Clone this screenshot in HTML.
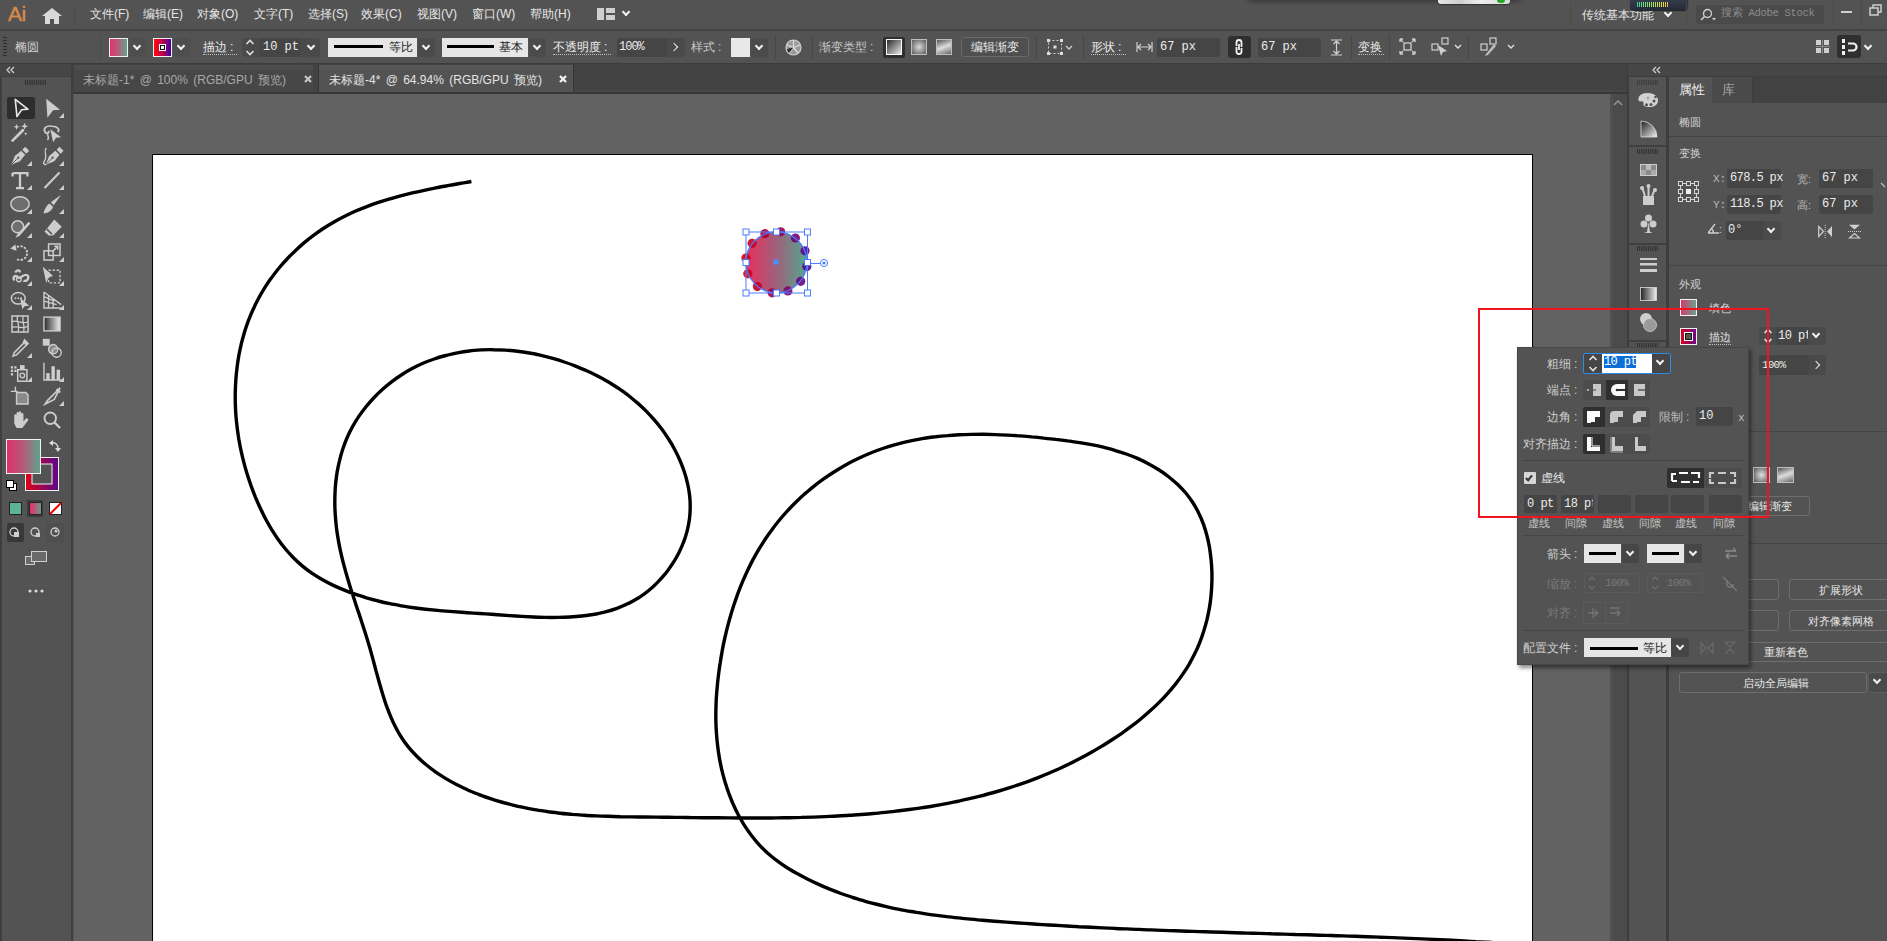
<!DOCTYPE html>
<html><head><meta charset="utf-8">
<style>
*{box-sizing:border-box;margin:0;padding:0}
html,body{width:1887px;height:941px;overflow:hidden;background:#535353;font-family:"Liberation Sans",sans-serif;font-size:12px;color:#dcdcdc}
.a{position:absolute}
.t{position:absolute;white-space:nowrap;line-height:14px}
.mono{font-family:"Liberation Mono",monospace}
.fld{position:absolute;background:#454545;border-radius:2px}
.btn{position:absolute;background:#464646;border-radius:2px}
.sep{position:absolute;background:#474747;width:1px}
.dd{position:absolute;border-radius:2px;background:#4d4d4d}
.chev{position:absolute;width:7px;height:7px;border-right:2px solid #f2f2f2;border-bottom:2px solid #f2f2f2;transform:rotate(45deg)}
.dot{border-bottom:1px dotted #cfcfcf}
</style></head><body>

<!-- MENU BAR -->
<div class="a" style="left:0;top:0;width:1887px;height:29px;background:#535353"></div>
<div class="a" style="left:0;top:29px;width:1887px;height:2px;background:#434343"></div>


<!-- menu content -->
<div class="t" style="left:8px;top:3px;font-size:21px;line-height:22px;color:#d88a4a;letter-spacing:-0.5px;-webkit-text-stroke:0.4px #d88a4a">Ai</div>
<svg class="a" style="left:42px;top:7.5px" width="20" height="16" viewBox="0 0 20 16"><path d="M10 0 L20 8 L17 8 L17 16 L12 16 L12 11 L8 11 L8 16 L3 16 L3 8 L0 8 Z" fill="#d9d9d9"/></svg>
<div class="a" style="left:74px;top:5px;width:1px;height:20px;background:#4a4a4a"></div>
<div class="t" style="left:90px;top:7px;color:#e6e6e6">文件(F)</div>
<div class="t" style="left:143px;top:7px;color:#e6e6e6">编辑(E)</div>
<div class="t" style="left:197px;top:7px;color:#e6e6e6">对象(O)</div>
<div class="t" style="left:254px;top:7px;color:#e6e6e6">文字(T)</div>
<div class="t" style="left:308px;top:7px;color:#e6e6e6">选择(S)</div>
<div class="t" style="left:361px;top:7px;color:#e6e6e6">效果(C)</div>
<div class="t" style="left:417px;top:7px;color:#e6e6e6">视图(V)</div>
<div class="t" style="left:472px;top:7px;color:#e6e6e6">窗口(W)</div>
<div class="t" style="left:530px;top:7px;color:#e6e6e6">帮助(H)</div>
<svg class="a" style="left:597px;top:8px" width="18" height="12" viewBox="0 0 18 12"><rect x="0" y="0" width="7" height="12" fill="#cfcfcf"/><rect x="9" y="0" width="9" height="5" fill="#cfcfcf"/><rect x="9" y="7" width="9" height="5" fill="#cfcfcf"/></svg>
<div class="chev" style="left:623px;top:9px;width:6px;height:6px;border-width:2px"></div>


<div class="a" style="left:1246px;top:-6px;width:278px;height:8px;background:#3a3a3a;border-radius:0 0 8px 8px;filter:blur(2px)"></div>
<div class="a" style="left:1438px;top:0;width:72px;height:4px;background:linear-gradient(90deg,#e8e8e8,#cfcfcf 30%,#eee 60%,#d8d8d8);border-radius:0 0 3px 3px;box-shadow:0 1px 1px #333"></div>
<div class="a" style="left:1497px;top:0;width:8px;height:3px;background:#22aa22;border-radius:0 0 4px 4px"></div>
<div class="a" style="left:1570px;top:3px;width:1px;height:22px;background:#4a4a4a"></div>
<div class="t" style="left:1582px;top:8px;color:#e6e6e6">传统基本功能</div>
<div class="chev" style="left:1665px;top:10px;width:6px;height:6px;border-width:2px"></div>
<div class="a" style="left:1630px;top:0;width:58px;height:10px;background:linear-gradient(#343c4c,#252b38);border-radius:0 0 4px 4px;box-shadow:0 1px 1px #222"></div>
<div class="a" style="left:1637px;top:2px;width:32px;height:5px;background:linear-gradient(90deg,#40d8a0,#a0e060 45%,#e8e040 80%,#f0b030);-webkit-mask:repeating-linear-gradient(90deg,#000 0 1px,transparent 1px 2px)"></div>
<div class="a" style="left:1686px;top:3px;width:1px;height:22px;background:#4a4a4a"></div>
<div class="a" style="left:1696px;top:5px;width:128px;height:19px;background:#4a4a4a;border-radius:3px"></div>
<svg class="a" style="left:1700px;top:8px" width="16" height="14" viewBox="0 0 16 14"><circle cx="7.5" cy="5.5" r="4" fill="none" stroke="#cfcfcf" stroke-width="1.4"/><path d="M4.5 8.5 L1 12" stroke="#cfcfcf" stroke-width="1.6"/><path d="M12 10 L16 10 L14 12.5 Z" fill="#cfcfcf"/></svg>
<div class="t" style="left:1721px;top:6px;color:#8c8c8c;font-family:'Liberation Mono',monospace;font-size:10.5px;letter-spacing:-0.3px">搜索 Adobe Stock</div>
<div class="a" style="left:1833px;top:0;width:1px;height:25px;background:#4a4a4a"></div>
<div class="a" style="left:1841px;top:11px;width:11px;height:2px;background:#cfcfcf"></div>
<div class="a" style="left:1861px;top:0;width:1px;height:25px;background:#4a4a4a"></div>
<svg class="a" style="left:1869px;top:4px" width="13" height="12" viewBox="0 0 13 12"><rect x="1" y="4" width="8" height="7" fill="none" stroke="#cfcfcf" stroke-width="1.5"/><path d="M4 4 V1 H12 V8 H9" fill="none" stroke="#cfcfcf" stroke-width="1.5"/></svg>

<!-- CONTROL BAR -->
<div class="a" style="left:0;top:31px;width:1887px;height:33px;background:#535353"></div>


<!-- control content -->
<div class="a" style="left:3px;top:37px;width:4px;height:20px;background:repeating-linear-gradient(#2e2e2e 0 1px,transparent 1px 3px)"></div>
<div class="t" style="left:15px;top:40px;color:#d2d2d2">椭圆</div>
<div class="a" style="left:100px;top:35px;width:1px;height:24px;background:#4a4a4a"></div>
<!-- fill swatch -->
<div class="a" style="left:109px;top:38px;width:19px;height:19px;background:#f0f0f0"></div>
<div class="a" style="left:110px;top:39px;width:17px;height:17px;background:linear-gradient(90deg,#e0356a,#b85a78 45%,#5fa58e)"></div>
<div class="dd" style="left:130px;top:38px;width:16px;height:19px;background:#4e4e4e"></div>
<div class="chev" style="left:134px;top:43px;width:6px;height:6px;border-width:2px"></div>
<!-- stroke swatch -->
<div class="a" style="left:153px;top:38px;width:19px;height:19px;background:#f0f0f0"></div>
<div class="a" style="left:154px;top:39px;width:17px;height:17px;background:linear-gradient(90deg,#ff0a0a,#c0004a 50%,#3c00a8)"></div>
<div class="a" style="left:159px;top:44px;width:7px;height:7px;background:#fff"></div>
<div class="a" style="left:160px;top:45px;width:5px;height:5px;background:#fff;border:1px solid #111"></div>
<div class="dd" style="left:174px;top:38px;width:16px;height:19px;background:#4e4e4e"></div>
<div class="chev" style="left:178px;top:43px;width:6px;height:6px;border-width:2px"></div>
<div class="t" style="left:203px;top:40px;color:#ececec">描边<span style="margin-left:3px">:</span></div>
<div class="a" style="left:203px;top:54px;width:34px;border-bottom:1px dotted #bdbdbd"></div>
<!-- stroke weight -->
<div class="fld" style="left:242px;top:38px;width:78px;height:19px;background:#4a4a4a"></div>
<svg class="a" style="left:245px;top:39px" width="10" height="17" viewBox="0 0 10 17"><path d="M1.5 5 L5 1.5 L8.5 5 M1.5 12 L5 15.5 L8.5 12" stroke="#e0e0e0" stroke-width="1.6" fill="none"/></svg>
<div class="fld" style="left:260px;top:38px;width:40px;height:19px;background:#454545"></div>
<div class="t mono" style="left:263px;top:40px;color:#ececec">10 pt</div>
<div class="chev" style="left:308px;top:43px;width:6px;height:6px;border-width:2px"></div>
<!-- profile 1 -->
<div class="a" style="left:328px;top:38px;width:89px;height:19px;background:#e6e6e6"></div>
<div class="a" style="left:334px;top:45px;width:49px;height:3px;background:#000"></div>
<div class="t" style="left:389px;top:40px;color:#222">等比</div>
<div class="dd" style="left:418px;top:38px;width:17px;height:19px;background:#4b4b4b"></div>
<div class="chev" style="left:423px;top:43px;width:6px;height:6px;border-width:2px"></div>
<!-- profile 2 -->
<div class="a" style="left:442px;top:38px;width:86px;height:19px;background:#e6e6e6"></div>
<div class="a" style="left:447px;top:45px;width:47px;height:3px;background:#000"></div>
<div class="t" style="left:499px;top:40px;color:#222">基本</div>
<div class="dd" style="left:529px;top:38px;width:17px;height:19px;background:#4b4b4b"></div>
<div class="chev" style="left:534px;top:43px;width:6px;height:6px;border-width:2px"></div>
<div class="t" style="left:553px;top:40px;color:#ececec">不透明度<span style="margin-left:3px">:</span></div>
<div class="a" style="left:553px;top:54px;width:58px;border-bottom:1px dotted #bdbdbd"></div>
<div class="fld" style="left:617px;top:38px;width:68px;height:19px;background:#4a4a4a"></div>
<div class="fld" style="left:617px;top:38px;width:50px;height:19px;background:#454545"></div>
<div class="t mono" style="left:619px;top:40px;color:#ececec;letter-spacing:-1px">100%</div>
<div class="a" style="left:671px;top:44px;width:6px;height:6px;border-right:1.5px solid #e6e6e6;border-top:1.5px solid #e6e6e6;transform:rotate(45deg)"></div>
<div class="t" style="left:691px;top:40px;color:#c8c8c8">样式<span style="margin-left:3px">:</span></div>
<div class="a" style="left:731px;top:38px;width:19px;height:19px;background:#e8e8e8"></div>
<div class="dd" style="left:751px;top:38px;width:17px;height:19px;background:#4b4b4b"></div>
<div class="chev" style="left:756px;top:43px;width:6px;height:6px;border-width:2px"></div>
<div class="sep" style="left:775px;top:35px;height:24px"></div>
<svg class="a" style="left:785px;top:39px" width="17" height="17" viewBox="0 0 17 17"><circle cx="8.5" cy="8.5" r="7.5" fill="#9a9a9a" stroke="#cfcfcf" stroke-width="1.2"/><path d="M8.5 8.5 L8.5 1 M8.5 8.5 L15 6 M8.5 8.5 L13 14 M8.5 8.5 L4 14 M8.5 8.5 L2 6" stroke="#e0e0e0" stroke-width="1.2"/><path d="M8.5 8.5 L4 14 A7.5 7.5 0 0 1 2 10 Z" fill="#2a2a2a"/></svg>
<div class="sep" style="left:812px;top:35px;height:24px"></div>
<div class="t" style="left:819px;top:40px;color:#c8c8c8">渐变类型<span style="margin-left:3px">:</span></div>
<div class="a" style="left:883px;top:37px;width:22px;height:21px;background:#2f2f2f;border-radius:2px"></div>
<div class="a" style="left:886px;top:39px;width:16px;height:16px;border:1.5px solid #fafafa;background:linear-gradient(135deg,#2a2a2a,#e8e8e8)"></div>
<div class="a" style="left:911px;top:39px;width:16px;height:16px;border:1px solid #bdbdbd;background:radial-gradient(circle,#d8d8d8,#5a5a5a)"></div>
<div class="a" style="left:936px;top:39px;width:16px;height:16px;border:1px solid #bdbdbd;background:linear-gradient(160deg,#555,#ddd 50%,#666)"></div>
<div class="a" style="left:961px;top:37px;width:68px;height:20px;border:1px solid #6a6a6a;border-radius:3px;background:#4f4f4f"></div>
<div class="t" style="left:971px;top:40px;color:#e8e8e8">编辑渐变</div>
<div class="sep" style="left:1036px;top:35px;height:24px"></div>
<svg class="a" style="left:1047px;top:39px" width="28" height="16" viewBox="0 0 28 16"><rect x="1.5" y="1.5" width="13" height="13" fill="none" stroke="#cfcfcf" stroke-dasharray="2 2"/><rect x="0" y="0" width="3" height="3" fill="#ddd"/><rect x="13" y="0" width="3" height="3" fill="#ddd"/><rect x="0" y="13" width="3" height="3" fill="#ddd"/><rect x="13" y="13" width="3" height="3" fill="#ddd"/><rect x="6.5" y="6.5" width="3" height="3" fill="#ddd"/><path d="M19 7 L22 10 L25 7" stroke="#cfcfcf" stroke-width="1.3" fill="none"/></svg>
<div class="sep" style="left:1083px;top:35px;height:24px"></div>
<div class="t" style="left:1091px;top:40px;color:#ececec">形状<span style="margin-left:3px">:</span></div>
<div class="a" style="left:1091px;top:54px;width:35px;border-bottom:1px dotted #bdbdbd"></div>
<svg class="a" style="left:1136px;top:42px" width="17" height="10" viewBox="0 0 17 10"><path d="M1 0 V10 M16 0 V10 M2 5 H15 M2 5 L5 2 M2 5 L5 8 M15 5 L12 2 M15 5 L12 8" stroke="#cfcfcf" stroke-width="1.2" fill="none"/></svg>
<div class="fld" style="left:1157px;top:38px;width:63px;height:19px"></div>
<div class="t mono" style="left:1160px;top:40px;color:#ececec">67 px</div>
<div class="a" style="left:1228px;top:36px;width:23px;height:22px;background:#2f2f2f;border-radius:3px"></div>
<svg class="a" style="left:1233px;top:38px" width="12" height="18" viewBox="0 0 12 18"><path d="M3.5 8 V4.5 A2.5 2.5 0 0 1 8.5 4.5 V9 M8.5 10 V13.5 A2.5 2.5 0 0 1 3.5 13.5 V9 M6 6 V12" stroke="#f2f2f2" stroke-width="1.8" fill="none"/></svg>
<div class="fld" style="left:1258px;top:38px;width:63px;height:19px"></div>
<div class="t mono" style="left:1261px;top:40px;color:#ececec">67 px</div>
<svg class="a" style="left:1331px;top:39px" width="11" height="17" viewBox="0 0 11 17"><path d="M0 1 H11 M0 16 H11 M5.5 2 V15 M5.5 2 L2.5 5 M5.5 2 L8.5 5 M5.5 15 L2.5 12 M5.5 15 L8.5 12" stroke="#cfcfcf" stroke-width="1.2" fill="none"/></svg>
<div class="sep" style="left:1351px;top:35px;height:24px"></div>
<div class="t" style="left:1358px;top:40px;color:#e6e6e6">变换</div>
<div class="a" style="left:1358px;top:54px;width:26px;border-bottom:1px dotted #bdbdbd"></div>
<div class="sep" style="left:1389px;top:35px;height:24px"></div>
<svg class="a" style="left:1399px;top:38px" width="17" height="17" viewBox="0 0 17 17"><rect x="5" y="5" width="7" height="7" fill="none" stroke="#cfcfcf" stroke-width="1.3"/><path d="M1 1 L4 4 M1 1 H4 M1 1 V4 M16 1 L13 4 M16 1 H13 M16 1 V4 M1 16 L4 13 M1 16 H4 M1 16 V13 M16 16 L13 13 M16 16 H13 M16 16 V13" stroke="#cfcfcf" stroke-width="1.3" fill="none"/></svg>
<svg class="a" style="left:1431px;top:37px" width="34" height="20" viewBox="0 0 34 20"><rect x="1" y="7" width="6" height="6" fill="none" stroke="#cfcfcf" stroke-width="1.2"/><rect x="11" y="1" width="6" height="6" fill="none" stroke="#cfcfcf" stroke-width="1.2"/><path d="M7 8 L16 14 L12 15 L10 19 Z" fill="#cfcfcf"/><path d="M24 8 L27 11 L30 8" stroke="#e0e0e0" stroke-width="1.4" fill="none"/></svg>
<div class="sep" style="left:1468px;top:35px;height:24px"></div>
<svg class="a" style="left:1480px;top:37px" width="38" height="20" viewBox="0 0 38 20"><rect x="1" y="7" width="6" height="6" fill="none" stroke="#cfcfcf" stroke-width="1.2"/><rect x="10" y="1" width="6" height="6" fill="none" stroke="#cfcfcf" stroke-width="1.2"/><path d="M14 7 L6 17 L5 19 L8 18 L16 9 Z" fill="#bdbdbd"/><path d="M28 8 L31 11 L34 8" stroke="#e0e0e0" stroke-width="1.4" fill="none"/></svg>
<!-- right icons -->
<svg class="a" style="left:1816px;top:40px" width="14" height="14" viewBox="0 0 14 14"><rect x="0" y="0" width="5" height="5" fill="#cfcfcf"/><rect x="8" y="0" width="5" height="5" fill="#cfcfcf"/><rect x="0" y="8" width="5" height="5" fill="#cfcfcf"/><rect x="8" y="8" width="5" height="5" fill="#cfcfcf"/><path d="M6.5 0 V14 M0 6.5 H14" stroke="#888" stroke-width="1"/></svg>
<div class="a" style="left:1837px;top:35px;width:24px;height:23px;background:#2f2f2f;border-radius:3px"></div>
<svg class="a" style="left:1842px;top:39px" width="16" height="16" viewBox="0 0 16 16"><rect x="0" y="0" width="3" height="4" fill="#f0f0f0"/><rect x="0" y="6" width="3" height="4" fill="#f0f0f0"/><rect x="0" y="12" width="3" height="4" fill="#f0f0f0"/><path d="M6 4.5 H11 A3.5 3.5 0 0 1 11 11.5 H6" stroke="#f0f0f0" stroke-width="2.2" fill="none"/></svg>
<div class="chev" style="left:1865px;top:43px;width:6px;height:6px;border-width:2px"></div>

<!-- LEFT TOOLBAR -->
<div class="a" style="left:0;top:64px;width:74px;height:877px;background:#3f3f3f"></div>
<div class="a" style="left:0;top:64px;width:71px;height:12px;background:#464646"></div>
<div class="a" style="left:2px;top:77px;width:69px;height:864px;background:#535353"></div>
<div class="a" style="left:73px;top:94px;width:1px;height:847px;background:#575757"></div>

<svg class="a" style="left:0;top:0" width="74" height="941" viewBox="0 0 74 941"><rect x="7" y="97" width="28" height="22" rx="2" fill="#2e2e2e"/><g transform="translate(11.80,98.80) scale(1.15)"><path d="M3 0.5 L14 9 L8.5 9.5 L4.5 15.5 Z" fill="none" stroke="#e8e8e8" stroke-width="1.4" stroke-linejoin="round"/></g><g transform="translate(42.80,98.80) scale(1.15)"><path d="M3 0 L15 9.5 L9 10 L4 16.5 Z" fill="#cdcdcd"/></g><path d="M64 118 L64 113 L59 118 Z" fill="#cdcdcd"/><g transform="translate(10.80,122.80) scale(1.15)"><path d="M1.5 15.5 L10.5 6.5" stroke="#cdcdcd" stroke-width="2.4" stroke-linecap="round"/><path d="M5 1 L5.8 3 L8 3.5 L5.8 4 L5 6 L4.2 4 L2 3.5 L4.2 3 Z M12 0 L12.8 2.2 L15 3 L12.8 3.8 L12 6 L11.2 3.8 L9 3 L11.2 2.2Z M13 8 L13.5 9 L14.5 9.5 L13.5 10 L13 11 L12.5 10 L11.5 9.5 L12.5 9Z" fill="#cdcdcd"/></g><g transform="translate(42.80,122.80) scale(1.15)"><path d="M8 3 C3 2 0 5 2 8 C3 10 6 9 5 7 M8 3 C13 3 15 6 13 8" fill="none" stroke="#cdcdcd" stroke-width="1.5"/><path d="M6.5 5.5 L16 12.5 L11.5 13 L9 17 Z" fill="#cdcdcd"/><path d="M4 10 C5 12 5 14 4 15" stroke="#cdcdcd" stroke-width="1.3" fill="none"/></g><g transform="translate(10.80,146.80) scale(1.15)"><path d="M0.5 15.5 L3.5 8 L9 3.5 L12.5 7 L8 12.5 Z" fill="#cdcdcd"/><path d="M10 2.5 L12.5 0 L16 3.5 L13.5 6 Z" fill="#cdcdcd"/><circle cx="6.5" cy="9.5" r="1" fill="#535353"/><path d="M1 15 L6 10" stroke="#535353" stroke-width="0.8"/></g><path d="M32 166 L32 161 L27 166 Z" fill="#cdcdcd"/><g transform="translate(42.80,146.80) scale(1.15)"><g transform="translate(2,0)"><path d="M0.5 15.5 L3.5 8 L9 3.5 L12.5 7 L8 12.5 Z" fill="#cdcdcd"/><path d="M10 2.5 L12.5 0 L16 3.5 L13.5 6 Z" fill="#cdcdcd"/><circle cx="6.5" cy="9.5" r="1" fill="#535353"/><path d="M1 15 L6 10" stroke="#535353" stroke-width="0.8"/></g><path d="M3 1 C0 5 5 8 1 13 C0 15 2 16 3 15" fill="none" stroke="#cdcdcd" stroke-width="1.2"/></g><path d="M64 166 L64 161 L59 166 Z" fill="#cdcdcd"/><g transform="translate(10.80,170.80) scale(1.15)"><path d="M1.5 2 H14.5 V5 M1.5 2 V5 M8 2 V15 M4.5 15 H11.5" fill="none" stroke="#cdcdcd" stroke-width="2"/></g><path d="M32 190 L32 185 L27 190 Z" fill="#cdcdcd"/><g transform="translate(42.80,170.80) scale(1.15)"><path d="M1.5 15 L14.5 1.5" stroke="#cdcdcd" stroke-width="1.8"/></g><path d="M64 190 L64 185 L59 190 Z" fill="#cdcdcd"/><g transform="translate(10.80,194.80) scale(1.15)"><ellipse cx="8" cy="8" rx="8" ry="6.3" fill="#6e6e6e" stroke="#cdcdcd" stroke-width="1.3"/></g><path d="M32 214 L32 209 L27 214 Z" fill="#cdcdcd"/><g transform="translate(42.80,194.80) scale(1.15)"><path d="M16 0 L9.5 9 L7 6.5 Z" fill="#cdcdcd"/><path d="M6 7.5 L9 10.5 C7.5 14 4 16 0.5 16 C1.5 13 3 9 6 7.5 Z" fill="#cdcdcd"/></g><path d="M64 214 L64 209 L59 214 Z" fill="#cdcdcd"/><g transform="translate(10.80,218.80) scale(1.15)"><circle cx="6" cy="7" r="5.2" fill="#6e6e6e" stroke="#cdcdcd" stroke-width="1.3"/><path d="M15.5 2.5 L6 13 L4 16.5 L7.5 15 L17 4 Z" fill="#cdcdcd"/></g><path d="M32 238 L32 233 L27 238 Z" fill="#cdcdcd"/><g transform="translate(42.80,218.80) scale(1.15)"><path d="M10 0.5 L16.5 7 L9 14.5 H5 L1.5 11 Z" fill="#cdcdcd"/><path d="M3.5 9 L8 13.5" stroke="#535353" stroke-width="1.3"/></g><path d="M64 238 L64 233 L59 238 Z" fill="#cdcdcd"/><g transform="translate(10.80,242.80) scale(1.15)"><path d="M3 6 A6 6 0 1 1 5 14" fill="none" stroke="#cdcdcd" stroke-width="1.6" stroke-dasharray="2 1.2"/><path d="M-0.5 5 L4 1.5 L5 7 Z" fill="#cdcdcd"/></g><path d="M32 262 L32 257 L27 262 Z" fill="#cdcdcd"/><g transform="translate(42.80,242.80) scale(1.15)"><rect x="1" y="7" width="8" height="8" fill="none" stroke="#cdcdcd" stroke-width="1.3"/><rect x="5" y="1" width="10" height="10" fill="none" stroke="#cdcdcd" stroke-width="1.3"/><path d="M9 7 L13 3 M10 3 H13 V6" stroke="#cdcdcd" stroke-width="1.3" fill="none"/></g><path d="M64 262 L64 257 L59 262 Z" fill="#cdcdcd"/><g transform="translate(10.80,266.80) scale(1.15)"><path d="M3 12 C1 8 5 7 6 9 C8 12 12 4 15 8 C16 11 13 13 11 12 M4 5 C5 2 8 3 8 5" fill="none" stroke="#cdcdcd" stroke-width="2"/><circle cx="7" cy="11" r="2" fill="none" stroke="#cdcdcd" stroke-width="1.2"/></g><path d="M32 286 L32 281 L27 286 Z" fill="#cdcdcd"/><g transform="translate(42.80,266.80) scale(1.15)"><path d="M0 0 L9 8 L5 9 L3 14 Z" fill="#cdcdcd"/><rect x="5" y="3" width="10" height="11" fill="none" stroke="#cdcdcd" stroke-width="1.2" stroke-dasharray="2 1.5"/></g><path d="M64 286 L64 281 L59 286 Z" fill="#cdcdcd"/><g transform="translate(10.80,290.80) scale(1.15)"><ellipse cx="6.5" cy="6.5" rx="6" ry="5" fill="none" stroke="#cdcdcd" stroke-width="1.3"/><circle cx="4" cy="6.5" r="0.8" fill="#cdcdcd"/><circle cx="6.5" cy="6.5" r="0.8" fill="#cdcdcd"/><circle cx="9" cy="6.5" r="0.8" fill="#cdcdcd"/><path d="M8 6 L16 13 L12 13.5 L10 16 Z" fill="#cdcdcd"/></g><path d="M32 310 L32 305 L27 310 Z" fill="#cdcdcd"/><g transform="translate(42.80,290.80) scale(1.15)"><path d="M1 1 V15 H16 M1 1 L16 12 M1 5 L10 9 M1 9 L12 12 M5 4 V15 M9 7 V15" fill="none" stroke="#cdcdcd" stroke-width="1.2"/></g><path d="M64 310 L64 305 L59 310 Z" fill="#cdcdcd"/><g transform="translate(10.80,314.80) scale(1.15)"><rect x="1" y="1" width="14" height="14" fill="none" stroke="#cdcdcd" stroke-width="1.3"/><path d="M1 6 C5 4 10 9 15 6 M1 11 C5 9 10 13 15 10 M6 1 C4 5 9 10 6 15 M11 1 C9 5 13 10 11 15" fill="none" stroke="#cdcdcd" stroke-width="1.1"/></g><defs><linearGradient id="tg" x1="0" x2="1"><stop offset="0" stop-color="#2a2a2a"/><stop offset="1" stop-color="#eeeeee"/></linearGradient></defs><g transform="translate(42.80,314.80) scale(1.15)"><rect x="1" y="2" width="14" height="12" fill="url(#tg)" stroke="#cdcdcd" stroke-width="1.2"/></g><g transform="translate(10.80,338.80) scale(1.15)"><path d="M12 1 L15 4 L13 6 L5 14 L2 15 L3 12 L11 4 Z" fill="none" stroke="#cdcdcd" stroke-width="1.4"/><path d="M11 2 L14 5" stroke="#cdcdcd" stroke-width="2.5"/></g><path d="M32 358 L32 353 L27 358 Z" fill="#cdcdcd"/><g transform="translate(42.80,338.80) scale(1.15)"><rect x="0" y="0" width="6" height="6" fill="#cdcdcd"/><circle cx="9" cy="9" r="4" fill="#8a8a8a" stroke="#cdcdcd" stroke-width="1.2"/><circle cx="12" cy="12" r="4" fill="none" stroke="#cdcdcd" stroke-width="1.2"/></g><g transform="translate(10.80,362.80) scale(1.15)"><rect x="6" y="6" width="8" height="10" fill="none" stroke="#cdcdcd" stroke-width="1.3"/><rect x="8" y="2" width="4" height="4" fill="#cdcdcd"/><circle cx="10" cy="11" r="2" fill="none" stroke="#cdcdcd" stroke-width="1.2"/><rect x="0" y="3" width="2" height="2" fill="#cdcdcd"/><rect x="3" y="3" width="2" height="2" fill="#cdcdcd"/><rect x="0" y="6" width="2" height="2" fill="#cdcdcd"/><rect x="3" y="6" width="2" height="2" fill="#cdcdcd"/><rect x="0" y="9" width="2" height="2" fill="#cdcdcd"/></g><path d="M32 382 L32 377 L27 382 Z" fill="#cdcdcd"/><g transform="translate(42.80,362.80) scale(1.15)"><path d="M1 0 V15 H16" fill="none" stroke="#cdcdcd" stroke-width="1.2"/><rect x="3" y="9" width="3" height="6" fill="#cdcdcd"/><rect x="7.5" y="3" width="3" height="12" fill="#cdcdcd"/><rect x="12" y="6" width="3" height="9" fill="#cdcdcd"/></g><path d="M64 382 L64 377 L59 382 Z" fill="#cdcdcd"/><g transform="translate(10.80,386.80) scale(1.15)"><path d="M4 0 V4 H0 M4 4 H6" stroke="#cdcdcd" stroke-width="1.2" fill="none"/><path d="M5 5 H13 L15 7 V15 H5 Z" fill="#8a8a8a" stroke="#cdcdcd" stroke-width="1.2"/></g><g transform="translate(42.80,386.80) scale(1.15)"><path d="M15 1 L10 11 L2 15 L4 12 Z" fill="none" stroke="#cdcdcd" stroke-width="1.4"/><path d="M12 2 L15 5" stroke="#cdcdcd" stroke-width="2"/></g><path d="M64 406 L64 401 L59 406 Z" fill="#cdcdcd"/><g transform="translate(10.80,410.80) scale(1.15)"><path d="M3 8 V4 A1 1 0 0 1 5 4 V8 V2 A1 1 0 0 1 7 2 V8 V1.5 A1 1 0 0 1 9 1.5 V8 V3 A1 1 0 0 1 11 3 V9 L13 7 A1 1 0 0 1 15 8.5 L10 15 H5 L3 11 Z" fill="#cdcdcd"/></g><g transform="translate(42.80,410.80) scale(1.15)"><circle cx="6.5" cy="6.5" r="5" fill="none" stroke="#cdcdcd" stroke-width="1.6"/><path d="M10 10 L15 15" stroke="#cdcdcd" stroke-width="2"/></g><path d="M10 67 L7 70 L10 73 M14 67 L11 70 L14 73" stroke="#d0d0d0" stroke-width="1.3" fill="none"/><g fill="#2e2e2e"><rect x="25.0" y="80" width="1" height="5"/><rect x="27.2" y="80" width="1" height="5"/><rect x="29.4" y="80" width="1" height="5"/><rect x="31.6" y="80" width="1" height="5"/><rect x="33.8" y="80" width="1" height="5"/><rect x="36.0" y="80" width="1" height="5"/><rect x="38.2" y="80" width="1" height="5"/><rect x="40.4" y="80" width="1" height="5"/><rect x="42.6" y="80" width="1" height="5"/><rect x="44.8" y="80" width="1" height="5"/></g><defs><linearGradient id="fg" x1="0" x2="1"><stop offset="0" stop-color="#e0306a"/><stop offset="0.5" stop-color="#b45b78"/><stop offset="1" stop-color="#5aa58d"/></linearGradient>
<linearGradient id="sg" x1="0" x2="1"><stop offset="0" stop-color="#dc0015"/><stop offset="1" stop-color="#5a0a8c"/></linearGradient></defs>
<rect x="25.5" y="457.5" width="33" height="33" fill="url(#sg)" stroke="#f2f2f2" stroke-width="1"/>
<rect x="32" y="464" width="20" height="20" fill="#535353" stroke="#f2f2f2" stroke-width="1"/>
<rect x="36" y="468" width="12" height="12" fill="#535353"/>
<rect x="6.5" y="439.5" width="34" height="34" fill="url(#fg)" stroke="#f2f2f2" stroke-width="1"/>
<path d="M51 443 C55 442 58 444 58 449" stroke="#d8d8d8" stroke-width="1.4" fill="none"/><path d="M49 443 L53 440 L53 446 Z M58 452 L55 448 L61 448 Z" fill="#d8d8d8"/>
<rect x="9.5" y="483.5" width="7" height="7" fill="#fff" stroke="#000"/><rect x="6.5" y="480.5" width="7" height="7" fill="#fff" stroke="#000"/>
<rect x="8" y="501" width="15" height="15" fill="#535353"/>
<rect x="9.5" y="502.5" width="12" height="12" fill="#5cb39a" stroke="#222" stroke-width="1"/>
<rect x="27" y="500" width="16" height="17" fill="#3c3c3c"/>
<rect x="29.5" y="502.5" width="12" height="12" fill="url(#fg)" stroke="#222" stroke-width="1"/>
<rect x="49.5" y="502.5" width="12" height="12" fill="#fff" stroke="#222" stroke-width="1"/>
<path d="M50 514 L61 503" stroke="#e00" stroke-width="2"/>
<rect x="7" y="523" width="17" height="19" rx="2" fill="#383838"/>
<circle cx="14" cy="532" r="4" fill="none" stroke="#cfcfcf" stroke-width="1.3"/><rect x="14" y="532" width="5" height="5" fill="#cfcfcf"/>
<circle cx="35" cy="532" r="4" fill="none" stroke="#cfcfcf" stroke-width="1.3"/><rect x="36" y="533" width="4" height="4" fill="#cfcfcf"/>
<rect x="46" y="523" width="18" height="19" rx="2" fill="#4f4f4f"/>
<circle cx="55" cy="532" r="4" fill="none" stroke="#cfcfcf" stroke-width="1.3"/><circle cx="56" cy="531" r="1.5" fill="#cfcfcf"/>
<rect x="25.5" y="556.5" width="9" height="8" fill="#6a6a6a" stroke="#cfcfcf"/><rect x="31.5" y="551.5" width="15" height="10" fill="#6a6a6a" stroke="#cfcfcf"/>
<circle cx="30" cy="591" r="1.6" fill="#d8d8d8"/><circle cx="36" cy="591" r="1.6" fill="#d8d8d8"/><circle cx="42" cy="591" r="1.6" fill="#d8d8d8"/>
</svg>
<!-- TAB STRIP -->
<div class="a" style="left:0;top:63px;width:1887px;height:1px;background:#3c3c3c"></div>
<div class="a" style="left:74px;top:64px;width:1553px;height:29px;background:#424242"></div>


<div class="a" style="left:74px;top:65px;width:239px;height:28px;background:#474747"></div>
<div class="a" style="left:74px;top:65px;width:239px;height:5px;background:#4c4c4c"></div>
<div class="a" style="left:318px;top:64px;width:1px;height:30px;background:#363636"></div>
<div class="t" style="left:83px;top:73px;color:#a8a8a8;word-spacing:2px">未标题-1* @ 100% (RGB/GPU 预览)</div>
<svg class="a" style="left:304px;top:75px" width="8" height="8" viewBox="0 0 8 8"><path d="M1 1 L7 7 M7 1 L1 7" stroke="#c4c4c4" stroke-width="2.2"/></svg>
<div class="a" style="left:319px;top:65px;width:254px;height:28px;background:#535353"></div>
<div class="a" style="left:319px;top:65px;width:254px;height:5px;background:#575757"></div>
<div class="a" style="left:573px;top:64px;width:1px;height:30px;background:#363636"></div>
<div class="t" style="left:329px;top:73px;color:#e4e4e4;word-spacing:2px">未标题-4* @ 64.94% (RGB/GPU 预览)</div>
<svg class="a" style="left:559px;top:75px" width="8" height="8" viewBox="0 0 8 8"><path d="M1 1 L7 7 M7 1 L1 7" stroke="#f4f4f4" stroke-width="2.2"/></svg>
<div class="a" style="left:574px;top:90px;width:1053px;height:2px;background:#474747"></div>
<div class="a" style="left:74px;top:92px;width:1553px;height:2px;background:#383838"></div>
<!-- CANVAS -->
<div class="a" style="left:74px;top:94px;width:1536px;height:847px;background:#626262"></div>
<div class="a" style="left:1610px;top:94px;width:17px;height:847px;background:#4b4b4b;border-left:3px solid #505050"></div>
<div class="a" style="left:152px;top:154px;width:1381px;height:790px;background:#000"></div>
<div class="a" style="left:153px;top:155px;width:1379px;height:790px;background:#fff"></div>


<!-- ARTWORK -->
<svg class="a" style="left:0;top:0" width="1887" height="941" viewBox="0 0 1887 941">
<path id="curve" d="M471.4 181.5 C467.5 182.2 463.6 182.8 459.6 183.5 C455.6 184.2 451.7 184.9 447.7 185.7 C443.8 186.4 439.8 187.1 435.9 187.9 C432.0 188.7 428.0 189.5 424.1 190.3 C420.2 191.1 416.2 192.0 412.3 192.9 C408.4 193.9 404.5 194.8 400.6 195.8 C396.8 196.9 392.9 197.9 389.0 199.1 C385.2 200.2 381.4 201.4 377.6 202.7 C373.7 204.0 370.0 205.3 366.2 206.8 C362.5 208.2 358.8 209.7 355.1 211.3 C351.4 213.0 347.8 214.7 344.2 216.5 C340.6 218.3 337.0 220.2 333.6 222.2 C330.1 224.2 326.7 226.3 323.3 228.5 C320.0 230.7 316.7 233.0 313.5 235.4 C310.2 237.8 307.1 240.3 304.0 242.9 C301.0 245.5 298.0 248.2 295.1 250.9 C292.1 253.7 289.3 256.5 286.6 259.5 C283.8 262.4 281.2 265.4 278.6 268.5 C276.1 271.6 273.6 274.8 271.3 278.1 C268.9 281.3 266.7 284.7 264.5 288.1 C262.4 291.5 260.4 294.9 258.5 298.5 C256.6 302.0 254.8 305.6 253.2 309.3 C251.5 312.9 250.0 316.6 248.5 320.4 C247.1 324.1 245.8 327.9 244.6 331.8 C243.5 335.6 242.4 339.5 241.4 343.4 C240.5 347.3 239.7 351.2 238.9 355.2 C238.2 359.1 237.6 363.1 237.1 367.1 C236.6 371.0 236.2 375.0 235.9 379.1 C235.6 383.1 235.4 387.1 235.3 391.1 C235.2 395.1 235.2 399.1 235.3 403.1 C235.4 407.1 235.6 411.1 235.9 415.2 C236.2 419.2 236.6 423.2 237.1 427.1 C237.6 431.1 238.2 435.1 238.8 439.1 C239.5 443.0 240.2 447.0 241.1 450.9 C241.9 454.8 242.9 458.7 243.9 462.6 C244.9 466.5 246.0 470.4 247.2 474.2 C248.4 478.0 249.7 481.8 251.0 485.6 C252.4 489.4 253.8 493.1 255.3 496.9 C256.9 500.6 258.5 504.3 260.2 507.9 C261.9 511.5 263.6 515.1 265.5 518.7 C267.4 522.2 269.4 525.7 271.4 529.2 C273.5 532.6 275.7 536.0 278.0 539.2 C280.3 542.5 282.8 545.7 285.3 548.8 C287.9 551.9 290.6 554.9 293.4 557.8 C296.2 560.6 299.2 563.3 302.2 565.9 C305.3 568.5 308.5 570.9 311.8 573.2 C315.1 575.4 318.6 577.5 322.1 579.5 C325.6 581.5 329.1 583.3 332.8 585.1 C336.4 586.8 340.1 588.4 343.8 589.9 C347.5 591.5 351.3 592.9 355.1 594.2 C358.9 595.5 362.7 596.7 366.5 597.9 C370.4 599.0 374.3 600.1 378.2 601.0 C382.1 602.0 386.0 602.9 389.9 603.7 C393.8 604.5 397.8 605.2 401.7 605.9 C405.7 606.6 409.7 607.2 413.6 607.7 C417.6 608.3 421.6 608.8 425.6 609.2 C429.6 609.6 433.6 610.0 437.6 610.4 C441.6 610.8 445.6 611.1 449.6 611.4 C453.6 611.7 457.6 612.0 461.6 612.3 C465.6 612.6 469.6 612.8 473.6 613.1 C477.6 613.4 481.6 613.6 485.6 613.9 C489.6 614.2 493.6 614.4 497.6 614.7 C501.6 615.0 505.6 615.3 509.7 615.6 C513.7 615.9 517.7 616.1 521.7 616.4 C525.7 616.6 529.7 616.8 533.7 617.0 C537.7 617.2 541.7 617.3 545.7 617.4 C549.8 617.5 553.8 617.5 557.8 617.4 C561.8 617.4 565.8 617.3 569.8 617.0 C573.9 616.8 577.9 616.5 581.8 616.0 C585.9 615.6 589.8 615.0 593.8 614.4 C597.7 613.6 601.7 612.8 605.5 611.8 C609.4 610.8 613.3 609.6 617.0 608.3 C620.8 606.9 624.5 605.4 628.1 603.6 C631.7 601.9 635.2 599.9 638.7 597.8 C642.0 595.6 645.3 593.3 648.4 590.7 C651.5 588.2 654.5 585.5 657.3 582.6 C660.2 579.8 662.8 576.8 665.4 573.7 C667.9 570.5 670.2 567.3 672.4 563.9 C674.6 560.6 676.7 557.1 678.5 553.5 C680.3 549.9 682.0 546.3 683.4 542.5 C684.9 538.8 686.1 534.9 687.1 531.1 C688.1 527.2 688.9 523.2 689.4 519.2 C690.0 515.3 690.2 511.3 690.2 507.2 C690.3 503.2 690.0 499.2 689.6 495.2 C689.1 491.2 688.4 487.3 687.5 483.4 C686.6 479.5 685.6 475.6 684.3 471.8 C683.0 468.0 681.6 464.2 680.0 460.5 C678.4 456.8 676.7 453.2 674.8 449.7 C672.9 446.1 670.9 442.6 668.7 439.3 C666.5 435.9 664.3 432.5 661.9 429.3 C659.5 426.1 657.0 423.0 654.3 419.9 C651.7 416.9 649.0 414.0 646.2 411.1 C643.3 408.3 640.4 405.5 637.4 402.9 C634.3 400.2 631.2 397.7 628.1 395.2 C624.9 392.8 621.6 390.5 618.3 388.2 C614.9 386.0 611.5 383.9 608.1 381.8 C604.6 379.8 601.1 377.8 597.5 376.0 C594.0 374.2 590.3 372.4 586.7 370.8 C583.0 369.1 579.3 367.6 575.6 366.1 C571.9 364.6 568.1 363.2 564.3 362.0 C560.5 360.7 556.6 359.5 552.8 358.4 C548.9 357.3 545.0 356.3 541.1 355.4 C537.2 354.5 533.3 353.7 529.3 353.0 C525.3 352.3 521.4 351.7 517.4 351.2 C513.4 350.7 509.4 350.4 505.4 350.1 C501.4 349.8 497.4 349.7 493.4 349.7 C489.3 349.6 485.3 349.7 481.3 349.9 C477.3 350.2 473.3 350.5 469.3 351.0 C465.3 351.5 461.4 352.1 457.4 352.8 C453.5 353.6 449.6 354.4 445.7 355.5 C441.8 356.5 437.9 357.6 434.2 359.0 C430.4 360.3 426.6 361.7 422.9 363.3 C419.3 364.9 415.6 366.7 412.1 368.6 C408.6 370.5 405.1 372.5 401.7 374.7 C398.4 376.8 395.1 379.1 391.9 381.6 C388.7 384.0 385.6 386.6 382.6 389.3 C379.6 392.0 376.7 394.8 373.9 397.7 C371.2 400.6 368.5 403.6 366.0 406.7 C363.5 409.9 361.1 413.1 358.8 416.4 C356.6 419.7 354.5 423.2 352.5 426.7 C350.6 430.2 348.8 433.8 347.2 437.5 C345.6 441.1 344.2 444.9 342.9 448.7 C341.6 452.5 340.5 456.4 339.6 460.3 C338.6 464.2 337.8 468.1 337.1 472.1 C336.5 476.0 336.0 480.0 335.6 484.0 C335.2 488.0 335.0 492.0 334.9 496.0 C334.8 500.0 334.8 504.1 334.9 508.1 C335.1 512.1 335.3 516.1 335.7 520.1 C336.0 524.1 336.5 528.1 337.0 532.1 C337.6 536.0 338.3 540.0 339.0 543.9 C339.8 547.9 340.6 551.8 341.5 555.7 C342.4 559.6 343.4 563.5 344.5 567.4 C345.5 571.3 346.6 575.1 347.8 579.0 C348.9 582.8 350.1 586.7 351.3 590.5 C352.6 594.3 353.8 598.1 355.1 601.9 C356.3 605.8 357.6 609.6 358.9 613.4 C360.1 617.2 361.4 621.0 362.6 624.8 C363.9 628.6 365.1 632.5 366.3 636.3 C367.5 640.1 368.6 644.0 369.8 647.8 C370.9 651.7 371.9 655.5 373.0 659.4 C374.0 663.3 375.1 667.2 376.1 671.1 C377.2 674.9 378.2 678.8 379.3 682.7 C380.4 686.5 381.5 690.4 382.7 694.2 C383.9 698.1 385.1 701.9 386.4 705.7 C387.8 709.5 389.2 713.2 390.8 716.9 C392.3 720.6 394.0 724.3 395.9 727.8 C397.7 731.4 399.8 734.9 402.0 738.2 C404.2 741.6 406.6 744.8 409.1 747.9 C411.7 751.0 414.4 753.9 417.3 756.8 C420.1 759.6 423.1 762.3 426.2 764.8 C429.3 767.4 432.5 769.8 435.8 772.1 C439.1 774.4 442.5 776.5 445.9 778.6 C449.4 780.7 452.9 782.6 456.5 784.5 C460.0 786.3 463.7 788.0 467.3 789.7 C471.0 791.3 474.7 792.8 478.4 794.3 C482.2 795.8 486.0 797.1 489.8 798.4 C493.6 799.7 497.4 800.9 501.3 802.0 C505.1 803.1 509.0 804.1 512.9 805.1 C516.8 806.1 520.7 806.9 524.6 807.7 C528.6 808.5 532.5 809.3 536.5 809.9 C540.4 810.6 544.4 811.2 548.4 811.8 C552.4 812.3 556.4 812.8 560.3 813.2 C564.3 813.7 568.3 814.0 572.3 814.4 C576.3 814.7 580.3 815.0 584.3 815.2 C588.3 815.5 592.4 815.7 596.4 815.9 C600.4 816.1 604.4 816.2 608.4 816.3 C612.4 816.5 616.4 816.6 620.5 816.7 C624.5 816.7 628.5 816.8 632.5 816.9 C636.5 816.9 640.5 817.0 644.5 817.0 C648.5 817.1 652.6 817.1 656.6 817.1 C660.6 817.2 664.6 817.2 668.6 817.3 C672.6 817.3 676.7 817.4 680.7 817.4 C684.7 817.5 688.7 817.5 692.7 817.6 C696.7 817.6 700.7 817.7 704.8 817.7 C708.8 817.8 712.8 817.8 716.8 817.8 C720.8 817.9 724.8 817.9 728.8 817.9 C732.9 818.0 736.9 818.0 740.9 818.0 C744.9 818.0 748.9 818.0 752.9 818.0 C757.0 818.0 761.0 818.0 765.0 818.0 C769.0 818.0 773.0 817.9 777.0 817.9 C781.0 817.8 785.1 817.8 789.1 817.7 C793.1 817.6 797.1 817.5 801.1 817.4 C805.1 817.3 809.1 817.2 813.2 817.1 C817.2 816.9 821.2 816.8 825.2 816.6 C829.2 816.4 833.2 816.3 837.2 816.0 C841.2 815.8 845.2 815.6 849.2 815.3 C853.3 815.1 857.3 814.8 861.3 814.5 C865.3 814.2 869.3 813.9 873.3 813.5 C877.3 813.2 881.3 812.8 885.3 812.4 C889.3 812.0 893.2 811.5 897.2 811.0 C901.2 810.6 905.2 810.1 909.2 809.5 C913.2 809.0 917.1 808.5 921.1 807.9 C925.1 807.3 929.0 806.6 933.0 806.0 C937.0 805.3 940.9 804.6 944.9 803.8 C948.8 803.1 952.7 802.3 956.7 801.5 C960.6 800.7 964.5 799.8 968.4 798.9 C972.4 798.0 976.3 797.1 980.1 796.1 C984.0 795.1 987.9 794.1 991.8 793.0 C995.7 791.9 999.5 790.8 1003.4 789.6 C1007.2 788.5 1011.0 787.3 1014.8 786.0 C1018.6 784.7 1022.4 783.4 1026.2 782.1 C1030.0 780.7 1033.8 779.3 1037.5 777.8 C1041.2 776.4 1045.0 774.9 1048.7 773.3 C1052.3 771.7 1056.0 770.1 1059.7 768.5 C1063.3 766.8 1067.0 765.1 1070.6 763.3 C1074.2 761.5 1077.7 759.7 1081.3 757.8 C1084.8 756.0 1088.4 754.0 1091.9 752.0 C1095.3 750.1 1098.8 748.0 1102.2 745.9 C1105.7 743.9 1109.1 741.7 1112.4 739.5 C1115.8 737.3 1119.1 735.1 1122.4 732.8 C1125.7 730.5 1129.0 728.1 1132.2 725.7 C1135.4 723.3 1138.5 720.8 1141.6 718.2 C1144.7 715.7 1147.7 713.0 1150.7 710.3 C1153.7 707.6 1156.6 704.9 1159.4 702.1 C1162.3 699.2 1165.1 696.3 1167.7 693.3 C1170.4 690.3 1173.0 687.2 1175.5 684.1 C1178.0 680.9 1180.4 677.7 1182.6 674.4 C1184.9 671.1 1187.1 667.7 1189.1 664.3 C1191.1 660.8 1193.0 657.3 1194.8 653.6 C1196.6 650.0 1198.2 646.4 1199.7 642.6 C1201.2 638.9 1202.5 635.1 1203.7 631.3 C1204.9 627.5 1206.0 623.6 1207.0 619.7 C1207.9 615.8 1208.7 611.9 1209.4 607.9 C1210.1 603.9 1210.6 600.0 1211.0 596.0 C1211.4 592.0 1211.7 588.0 1211.8 583.9 C1212.0 579.9 1212.0 575.9 1211.9 571.9 C1211.8 567.9 1211.5 563.9 1211.1 559.9 C1210.7 555.9 1210.2 551.9 1209.6 547.9 C1208.9 544.0 1208.1 540.0 1207.1 536.2 C1206.1 532.3 1204.9 528.4 1203.6 524.6 C1202.2 520.8 1200.7 517.1 1198.9 513.5 C1197.2 509.9 1195.2 506.4 1193.1 503.0 C1190.9 499.6 1188.5 496.4 1186.0 493.3 C1183.4 490.2 1180.6 487.3 1177.7 484.5 C1174.8 481.8 1171.7 479.2 1168.6 476.7 C1165.4 474.2 1162.1 471.9 1158.7 469.8 C1155.3 467.6 1151.9 465.6 1148.3 463.7 C1144.8 461.8 1141.2 460.1 1137.5 458.4 C1133.8 456.8 1130.1 455.4 1126.3 454.0 C1122.5 452.7 1118.7 451.4 1114.8 450.3 C1111.0 449.2 1107.1 448.2 1103.2 447.2 C1099.3 446.3 1095.4 445.5 1091.4 444.7 C1087.5 443.9 1083.5 443.2 1079.6 442.6 C1075.6 442.0 1071.6 441.4 1067.6 440.9 C1063.7 440.3 1059.7 439.8 1055.7 439.4 C1051.7 438.9 1047.7 438.5 1043.7 438.1 C1039.7 437.6 1035.7 437.2 1031.7 436.9 C1027.7 436.5 1023.7 436.2 1019.7 435.9 C1015.7 435.6 1011.7 435.3 1007.7 435.1 C1003.7 434.9 999.7 434.7 995.7 434.6 C991.6 434.5 987.6 434.4 983.6 434.3 C979.6 434.3 975.6 434.3 971.6 434.4 C967.6 434.5 963.5 434.6 959.5 434.8 C955.5 435.0 951.5 435.2 947.5 435.6 C943.5 435.9 939.5 436.3 935.5 436.8 C931.5 437.2 927.6 437.8 923.6 438.4 C919.6 439.1 915.7 439.8 911.8 440.6 C907.8 441.4 903.9 442.3 900.0 443.3 C896.1 444.3 892.3 445.4 888.4 446.6 C884.6 447.8 880.8 449.1 877.0 450.5 C873.3 451.9 869.6 453.4 865.9 455.0 C862.2 456.6 858.6 458.3 855.0 460.1 C851.4 461.9 847.8 463.8 844.3 465.7 C840.8 467.7 837.4 469.8 834.0 472.0 C830.6 474.1 827.3 476.3 824.0 478.7 C820.7 481.0 817.5 483.4 814.4 485.9 C811.2 488.4 808.2 491.0 805.1 493.6 C802.1 496.3 799.2 499.0 796.3 501.8 C793.4 504.6 790.6 507.5 787.9 510.4 C785.1 513.4 782.5 516.4 779.9 519.5 C777.3 522.5 774.9 525.7 772.5 528.9 C770.1 532.1 767.7 535.4 765.5 538.7 C763.3 542.1 761.1 545.5 759.1 548.9 C757.0 552.4 755.0 555.9 753.1 559.4 C751.3 562.9 749.5 566.5 747.7 570.2 C746.0 573.8 744.4 577.4 742.8 581.1 C741.2 584.8 739.7 588.6 738.3 592.3 C736.9 596.1 735.6 599.9 734.3 603.7 C733.0 607.5 731.8 611.3 730.7 615.2 C729.6 619.0 728.5 622.9 727.5 626.8 C726.5 630.7 725.6 634.6 724.7 638.5 C723.8 642.4 723.0 646.4 722.3 650.3 C721.6 654.3 720.9 658.2 720.3 662.2 C719.6 666.2 719.1 670.1 718.6 674.1 C718.1 678.1 717.6 682.1 717.3 686.1 C716.9 690.1 716.6 694.1 716.3 698.1 C716.1 702.1 716.0 706.1 715.9 710.1 C715.8 714.1 715.8 718.2 715.9 722.2 C716.0 726.2 716.2 730.2 716.5 734.2 C716.8 738.2 717.2 742.2 717.7 746.2 C718.1 750.2 718.7 754.1 719.4 758.1 C720.1 762.0 720.9 766.0 721.8 769.9 C722.7 773.8 723.8 777.7 724.9 781.5 C726.1 785.4 727.3 789.2 728.7 793.0 C730.1 796.7 731.5 800.5 733.2 804.2 C734.8 807.8 736.5 811.4 738.4 815.0 C740.3 818.6 742.3 822.0 744.4 825.4 C746.6 828.8 748.8 832.1 751.3 835.3 C753.7 838.5 756.3 841.6 759.0 844.6 C761.7 847.5 764.5 850.4 767.5 853.0 C770.5 855.7 773.6 858.2 776.9 860.6 C780.1 863.0 783.4 865.3 786.8 867.5 C790.2 869.6 793.6 871.7 797.1 873.6 C800.7 875.6 804.2 877.5 807.8 879.3 C811.4 881.1 815.0 882.8 818.7 884.4 C822.3 886.1 826.0 887.7 829.7 889.2 C833.5 890.7 837.2 892.1 841.0 893.5 C844.8 894.8 848.6 896.1 852.4 897.3 C856.2 898.6 860.1 899.7 863.9 900.8 C867.8 902.0 871.7 903.0 875.6 904.0 C879.4 905.0 883.3 905.9 887.3 906.8 C891.2 907.7 895.1 908.5 899.1 909.3 C903.0 910.0 906.9 910.8 910.9 911.5 C914.8 912.1 918.8 912.8 922.8 913.4 C926.8 914.0 930.7 914.6 934.7 915.1 C938.7 915.6 942.7 916.1 946.7 916.6 C950.6 917.1 954.6 917.5 958.6 917.9 C962.6 918.4 966.6 918.8 970.6 919.1 C974.6 919.5 978.6 919.9 982.6 920.2 C986.6 920.5 990.6 920.9 994.6 921.2 C998.6 921.5 1002.6 921.8 1006.6 922.1 C1010.6 922.4 1014.6 922.7 1018.6 923.0 C1022.6 923.3 1026.7 923.5 1030.7 923.8 C1034.7 924.1 1038.7 924.3 1042.7 924.6 C1046.7 924.8 1050.7 925.1 1054.7 925.3 C1058.7 925.5 1062.7 925.8 1066.7 926.0 C1070.7 926.2 1074.7 926.4 1078.8 926.7 C1082.8 926.9 1086.8 927.1 1090.8 927.3 C1094.8 927.5 1098.8 927.7 1102.8 927.9 C1106.8 928.1 1110.8 928.2 1114.8 928.4 C1118.9 928.6 1122.9 928.8 1126.9 928.9 C1130.9 929.1 1134.9 929.3 1138.9 929.4 C1142.9 929.6 1146.9 929.8 1150.9 929.9 C1155.0 930.1 1159.0 930.2 1163.0 930.4 C1167.0 930.5 1171.0 930.7 1175.0 930.8 C1179.0 930.9 1183.0 931.1 1187.1 931.2 C1191.1 931.3 1195.1 931.5 1199.1 931.6 C1203.1 931.7 1207.1 931.9 1211.1 932.0 C1215.2 932.1 1219.2 932.2 1223.2 932.3 C1227.2 932.5 1231.2 932.6 1235.2 932.7 C1239.2 932.8 1243.2 932.9 1247.3 933.1 C1251.3 933.2 1255.3 933.3 1259.3 933.4 C1263.3 933.5 1267.3 933.6 1271.3 933.8 C1275.3 933.9 1279.4 934.0 1283.4 934.1 C1287.4 934.2 1291.4 934.3 1295.4 934.5 C1299.4 934.6 1303.4 934.7 1307.5 934.8 C1311.5 934.9 1315.5 935.1 1319.5 935.2 C1323.5 935.3 1327.5 935.4 1331.5 935.5 C1335.5 935.7 1339.6 935.8 1343.6 935.9 C1347.6 936.1 1351.6 936.2 1355.6 936.3 C1359.6 936.5 1363.6 936.6 1367.6 936.7 C1371.7 936.9 1375.7 937.0 1379.7 937.2 C1383.7 937.3 1387.7 937.5 1391.7 937.6 C1395.7 937.8 1399.7 937.9 1403.8 938.1 C1407.8 938.3 1411.8 938.4 1415.8 938.6 C1419.8 938.8 1423.8 938.9 1427.8 939.1 C1431.8 939.3 1435.8 939.5 1439.9 939.7 C1443.9 939.9 1447.9 940.1 1451.9 940.3 C1455.9 940.5 1459.9 940.7 1463.9 940.9 C1467.9 941.1 1471.9 941.3 1475.9 941.6 C1480.0 941.8 1484.0 942.0 1488.0 942.3 C1492.0 942.5 1496.0 942.8 1500.0 943.0 C1504.0 943.3 1508.0 943.5 1512.0 943.8 C1516.0 944.1 1520.0 944.3 1524.0 944.6 C1528.0 944.9 1532.0 945.2 1536.0 945.5 C1540.0 945.8 1544.0 946.1 1548.0 946.4 C1552.1 946.7 1556.1 947.1 1560.1 947.4" fill="none" stroke="#000" stroke-width="3.4" stroke-linecap="butt"/>
<defs>
<linearGradient id="cg" x1="0" x2="1"><stop offset="0" stop-color="#e8305f"/><stop offset="0.5" stop-color="#a0607a"/><stop offset="1" stop-color="#50a890"/></linearGradient>
<linearGradient id="dg" gradientUnits="userSpaceOnUse" x1="742" x2="811" y1="0" y2="0"><stop offset="0" stop-color="#dd0010"/><stop offset="1" stop-color="#5a0890"/></linearGradient>
</defs>

<circle cx="776.4" cy="262.3" r="30.5" fill="url(#cg)"/><g opacity="0.9"><circle cx="780.7" cy="231.8" r="4.6" fill="#900358"/><circle cx="795.4" cy="238.0" r="4.6" fill="#720474"/><circle cx="805.0" cy="250.8" r="4.6" fill="#5e0587"/><circle cx="806.9" cy="266.6" r="4.6" fill="#5a058b"/><circle cx="800.7" cy="281.3" r="4.6" fill="#67057f"/><circle cx="787.9" cy="290.9" r="4.6" fill="#810466"/><circle cx="772.1" cy="292.8" r="4.6" fill="#a10247"/><circle cx="757.4" cy="286.6" r="4.6" fill="#bf012b"/><circle cx="747.8" cy="273.8" r="4.6" fill="#d30018"/><circle cx="745.9" cy="258.0" r="4.6" fill="#d70014"/><circle cx="752.1" cy="243.3" r="4.6" fill="#ca0020"/><circle cx="764.9" cy="233.7" r="4.6" fill="#b00139"/></g>
<circle cx="776.4" cy="262.3" r="30.5" fill="none" stroke="#4a7cff" stroke-width="1.2"/>
<rect x="746" y="232" width="61.5" height="61" fill="none" stroke="#4a7cff" stroke-width="1"/>
<path d="M808 263.5 H821" stroke="#4a7cff" stroke-width="1"/>
<circle cx="824" cy="263" r="3.6" fill="#fff" stroke="#4a7cff" stroke-width="1"/><circle cx="824" cy="263" r="1.6" fill="#4a7cff"/>
<g fill="#fff" stroke="#4a7cff" stroke-width="1">
<rect x="743" y="229" width="6" height="6"/><rect x="773.5" y="229" width="6" height="6"/><rect x="804.5" y="229" width="6" height="6"/>
<rect x="743" y="259.5" width="6" height="6"/><rect x="804.5" y="259.5" width="6" height="6"/>
<rect x="743" y="290" width="6" height="6"/><rect x="773.5" y="290" width="6" height="6"/><rect x="804.5" y="290" width="6" height="6"/>
</g>
<rect x="773.5" y="259.5" width="5" height="5" fill="#4a90ff"/>
</svg>

<!-- RIGHT DOCK -->
<div class="a" style="left:1627px;top:64px;width:260px;height:877px;background:#3d3d3d"></div>
<div class="a" style="left:1628px;top:64px;width:259px;height:12px;background:#464646"></div>
<div class="a" style="left:1629px;top:77px;width:37px;height:864px;background:#535353"></div>
<div class="a" style="left:1669px;top:77px;width:218px;height:864px;background:#535353"></div>

<svg class="a" style="left:0;top:0" width="1887" height="941" viewBox="0 0 1887 941"><path d="M1614 105 L1618 101 L1622 105" stroke="#9a9a9a" stroke-width="1.3" fill="none"/><path d="M1656 67 L1653 70 L1656 73 M1660 67 L1657 70 L1660 73" stroke="#d0d0d0" stroke-width="1.3" fill="none"/><rect x="1629" y="145" width="38" height="2" fill="#3f3f3f"/><rect x="1629" y="243" width="38" height="2" fill="#3f3f3f"/><rect x="1629" y="340" width="38" height="2" fill="#3f3f3f"/><g fill="#3a3a3a"><rect x="1637.0" y="80" width="1" height="5"/><rect x="1639.2" y="80" width="1" height="5"/><rect x="1641.4" y="80" width="1" height="5"/><rect x="1643.6" y="80" width="1" height="5"/><rect x="1645.8" y="80" width="1" height="5"/><rect x="1648.0" y="80" width="1" height="5"/><rect x="1650.2" y="80" width="1" height="5"/><rect x="1652.4" y="80" width="1" height="5"/><rect x="1654.6" y="80" width="1" height="5"/><rect x="1656.8" y="80" width="1" height="5"/></g><g fill="#2e2e2e"><rect x="1637.0" y="149" width="1" height="5"/><rect x="1639.2" y="149" width="1" height="5"/><rect x="1641.4" y="149" width="1" height="5"/><rect x="1643.6" y="149" width="1" height="5"/><rect x="1645.8" y="149" width="1" height="5"/><rect x="1648.0" y="149" width="1" height="5"/><rect x="1650.2" y="149" width="1" height="5"/><rect x="1652.4" y="149" width="1" height="5"/><rect x="1654.6" y="149" width="1" height="5"/><rect x="1656.8" y="149" width="1" height="5"/></g><g fill="#2e2e2e"><rect x="1637.0" y="246" width="1" height="5"/><rect x="1639.2" y="246" width="1" height="5"/><rect x="1641.4" y="246" width="1" height="5"/><rect x="1643.6" y="246" width="1" height="5"/><rect x="1645.8" y="246" width="1" height="5"/><rect x="1648.0" y="246" width="1" height="5"/><rect x="1650.2" y="246" width="1" height="5"/><rect x="1652.4" y="246" width="1" height="5"/><rect x="1654.6" y="246" width="1" height="5"/><rect x="1656.8" y="246" width="1" height="5"/></g><g fill="#2e2e2e"><rect x="1637.0" y="343" width="1" height="5"/><rect x="1639.2" y="343" width="1" height="5"/><rect x="1641.4" y="343" width="1" height="5"/><rect x="1643.6" y="343" width="1" height="5"/><rect x="1645.8" y="343" width="1" height="5"/><rect x="1648.0" y="343" width="1" height="5"/><rect x="1650.2" y="343" width="1" height="5"/><rect x="1652.4" y="343" width="1" height="5"/><rect x="1654.6" y="343" width="1" height="5"/><rect x="1656.8" y="343" width="1" height="5"/></g><g transform="translate(3297,0) scale(-1,1)"><path d="M1650 93 C1643 92.5 1638.5 96.5 1639 101 C1639.5 105.5 1644 107.5 1649 107 C1653 106.6 1654 105 1653.5 103.5 C1653 102 1654.5 101 1656 101.5 C1658 102 1659 100 1658.5 98 C1657.5 94.5 1654 93.2 1650 93 Z" fill="#d2d2d2"/><circle cx="1643" cy="101" r="1.5" fill="#505050"/><circle cx="1646" cy="104.5" r="1.5" fill="#505050"/><circle cx="1650.5" cy="104.8" r="1.5" fill="#505050"/><circle cx="1641.5" cy="97" r="1.3" fill="#505050"/><circle cx="1649" cy="98" r="1.5" fill="#aaaaaa"/></g><defs><linearGradient id="qg" x1="0" y1="0" x2="1" y2="1"><stop offset="0" stop-color="#1e1e1e"/><stop offset="1" stop-color="#f0f0f0"/></linearGradient></defs><path d="M1641 137 V121 A16 16 0 0 1 1657 137 Z" fill="url(#qg)" stroke="#ddd" stroke-width="0.8"/><rect x="1640.5" y="164.5" width="16" height="11" fill="none" stroke="#cdcdcd"/><rect x="1641" y="165" width="5" height="5" fill="#8a8a8a"/><rect x="1646" y="165" width="5" height="5" fill="#bbb"/><rect x="1651" y="165" width="5" height="5" fill="#8a8a8a"/><rect x="1641" y="170" width="5" height="5" fill="#aaa"/><rect x="1646" y="170" width="5" height="5" fill="#8a8a8a"/><rect x="1651" y="170" width="5" height="5" fill="#aaa"/><rect x="1643" y="196" width="11" height="9" fill="#cdcdcd"/><path d="M1645 196 L1642 187 M1648.5 196 L1648.5 185 M1652 196 L1655 189" stroke="#cdcdcd" stroke-width="2"/><circle cx="1642" cy="188" r="2" fill="#cdcdcd"/><circle cx="1648.5" cy="186" r="2" fill="#cdcdcd"/><circle cx="1655" cy="190" r="2" fill="#cdcdcd"/><circle cx="1648.5" cy="218" r="3.5" fill="#cdcdcd"/><circle cx="1644" cy="224" r="3.5" fill="#cdcdcd"/><circle cx="1653" cy="224" r="3.5" fill="#cdcdcd"/><path d="M1648.5 222 L1647 232 L1644 233 H1653 L1650 232 Z" fill="#cdcdcd"/><rect x="1640" y="258" width="17" height="2" fill="#cdcdcd"/><rect x="1640" y="263" width="17" height="2.5" fill="#cdcdcd"/><rect x="1640" y="269" width="17" height="3" fill="#cdcdcd"/><defs><linearGradient id="g2" x1="0" x2="1"><stop offset="0" stop-color="#222"/><stop offset="1" stop-color="#eee"/></linearGradient></defs><rect x="1640.5" y="287.5" width="16" height="13" fill="url(#g2)" stroke="#ddd" stroke-width="0.8"/><circle cx="1646" cy="319" r="6" fill="#cfcfcf"/><circle cx="1650" cy="325" r="6.5" fill="#9a9a9a" stroke="#cfcfcf" stroke-width="0.8"/></svg>
<!-- PROPERTIES PANEL -->
<div class="a" style="left:1669px;top:77px;width:218px;height:26px;background:#424242"></div>
<div class="a" style="left:1669px;top:77px;width:43px;height:26px;background:#535353"></div>
<div class="a" style="left:1712px;top:77px;width:40px;height:26px;background:#4a4a4a"></div>
<div class="a" style="left:1752px;top:77px;width:2px;height:26px;background:#3e3e3e"></div>
<div class="t" style="left:1679px;top:83px;color:#f0f0f0;font-size:13px">属性</div>
<div class="t" style="left:1722px;top:83px;color:#a8a8a8;font-size:13px">库</div>
<div class="t" style="left:1679px;top:115px;color:#cfcfcf;font-size:11px">椭圆</div>
<div class="a" style="left:1669px;top:136px;width:218px;height:1px;background:#454545"></div>
<div class="t" style="left:1679px;top:146px;color:#cfcfcf;font-size:11px">变换</div>
<svg class="a" style="left:1678px;top:181px" width="21" height="21" viewBox="0 0 21 21"><g fill="none" stroke="#d6d6d6" stroke-width="1"><rect x="0.5" y="0.5" width="4" height="4"/><rect x="8.5" y="0.5" width="4" height="4"/><rect x="16.5" y="0.5" width="4" height="4"/><rect x="0.5" y="8.5" width="4" height="4"/><rect x="16.5" y="8.5" width="4" height="4"/><rect x="0.5" y="16.5" width="4" height="4"/><rect x="8.5" y="16.5" width="4" height="4"/><rect x="16.5" y="16.5" width="4" height="4"/><path d="M4.5 2.5 H8.5 M12.5 2.5 H16.5 M4.5 18.5 H8.5 M12.5 18.5 H16.5 M2.5 4.5 V8.5 M2.5 12.5 V16.5 M18.5 4.5 V8.5 M18.5 12.5 V16.5"/></g><rect x="8" y="8" width="5" height="5" fill="#f0f0f0"/></svg>
<div class="t mono" style="left:1713px;top:172px;color:#bdbdbd;font-size:11px">X:</div>
<div class="fld" style="left:1727px;top:169px;width:54px;height:19px"></div>
<div class="t mono" style="left:1730px;top:171px;color:#ececec;font-size:12px;letter-spacing:-0.6px">678.5 px</div>
<div class="t mono" style="left:1713px;top:198px;color:#bdbdbd;font-size:11px">Y:</div>
<div class="fld" style="left:1727px;top:195px;width:54px;height:19px"></div>
<div class="t mono" style="left:1730px;top:197px;color:#ececec;font-size:12px;letter-spacing:-0.6px">118.5 px</div>
<div class="t" style="left:1797px;top:172px;color:#bdbdbd;font-size:11px">宽:</div>
<div class="fld" style="left:1819px;top:169px;width:54px;height:19px"></div>
<div class="t mono" style="left:1822px;top:171px;color:#ececec;font-size:12px">67 px</div>
<div class="t" style="left:1797px;top:198px;color:#bdbdbd;font-size:11px">高:</div>
<div class="fld" style="left:1819px;top:195px;width:54px;height:19px"></div>
<div class="t mono" style="left:1822px;top:197px;color:#ececec;font-size:12px">67 px</div>
<svg class="a" style="left:1880px;top:182px" width="7" height="10" viewBox="0 0 7 10"><path d="M1 1 L5 5" stroke="#bdbdbd" stroke-width="1.2"/></svg>
<svg class="a" style="left:1707px;top:222px" width="16" height="12" viewBox="0 0 16 12"><path d="M1 11 L8 2 M1 11 H12 M5 7 A4 4 0 0 1 6 11" stroke="#cfcfcf" stroke-width="1.3" fill="none"/><text x="12" y="11" fill="#cfcfcf" font-size="10" font-family="Liberation Sans">:</text></svg>
<div class="fld" style="left:1726px;top:221px;width:55px;height:19px;background:#4a4a4a"></div>
<div class="fld" style="left:1726px;top:221px;width:37px;height:19px"></div>
<div class="t mono" style="left:1728px;top:223px;color:#ececec;font-size:12px">0°</div>
<div class="chev" style="left:1768px;top:226px;width:6px;height:6px;border-width:2px"></div>
<svg class="a" style="left:1818px;top:225px" width="15" height="13" viewBox="0 0 15 13"><path d="M0.7 1.5 L5.5 6.5 L0.7 11.5 Z" fill="none" stroke="#cfcfcf" stroke-width="1.2"/><path d="M14 1 L9 6.5 L14 12 Z" fill="#cfcfcf"/><path d="M7.2 0 V13" stroke="#cfcfcf" stroke-dasharray="1 1"/></svg>
<svg class="a" style="left:1848px;top:224px" width="13" height="15" viewBox="0 0 13 15"><path d="M1 0.7 H12 L6.5 5.5 Z" fill="#cfcfcf"/><path d="M1.5 14 L6.5 9.5 L11.5 14 Z" fill="none" stroke="#cfcfcf" stroke-width="1.2"/><path d="M0 7.5 H13" stroke="#cfcfcf" stroke-dasharray="1 1"/></svg>
<div class="a" style="left:1669px;top:265px;width:218px;height:1px;background:#454545"></div>
<div class="t" style="left:1679px;top:277px;color:#cfcfcf;font-size:11px">外观</div>
<div class="a" style="left:1680px;top:299px;width:17px;height:17px;background:#f2f2f2"></div>
<div class="a" style="left:1681px;top:300px;width:15px;height:15px;background:linear-gradient(90deg,#d8386c,#9a7080 50%,#6fa08e)"></div>
<div class="t" style="left:1709px;top:301px;color:#d8d8d8;font-size:11px">填色</div>
<div class="a" style="left:1680px;top:328px;width:17px;height:17px;background:#f2f2f2"></div>
<div class="a" style="left:1681px;top:329px;width:15px;height:15px;background:linear-gradient(90deg,#d8001a,#6a0a8a)"></div>
<div class="a" style="left:1684px;top:332px;width:9px;height:9px;background:#fff"></div>
<div class="a" style="left:1685px;top:333px;width:7px;height:7px;background:#535353;border:1px solid #1a1a1a"></div>
<div class="t" style="left:1709px;top:330px;color:#e0e0e0;font-size:11px">描边</div>
<div class="a" style="left:1709px;top:344px;width:22px;border-bottom:1px dotted #bdbdbd"></div>
<div class="fld" style="left:1759px;top:327px;width:67px;height:18px;background:#4a4a4a"></div>
<svg class="a" style="left:1763px;top:328px" width="10" height="16" viewBox="0 0 10 16"><path d="M1.5 5 L5 1.5 L8.5 5 M1.5 11 L5 14.5 L8.5 11" stroke="#e0e0e0" stroke-width="1.6" fill="none"/></svg>
<div class="fld" style="left:1776px;top:327px;width:33px;height:18px"></div>
<div class="t mono" style="left:1778px;top:329px;color:#ececec;font-size:12px;letter-spacing:-0.5px;width:30px;overflow:hidden">10 pt</div>
<div class="chev" style="left:1813px;top:331px;width:6px;height:6px;border-width:2px"></div>
<div class="fld" style="left:1759px;top:355px;width:67px;height:20px;background:#4a4a4a"></div>
<div class="fld" style="left:1759px;top:355px;width:50px;height:20px"></div>
<div class="t mono" style="left:1762px;top:358px;color:#ececec;font-size:11px;letter-spacing:-0.8px">100%</div>
<div class="a" style="left:1813px;top:362px;width:6px;height:6px;border-right:1.5px solid #e6e6e6;border-top:1.5px solid #e6e6e6;transform:rotate(45deg)"></div>
<div class="a" style="left:1749px;top:431px;width:138px;height:1px;background:#454545"></div>
<div class="a" style="left:1753px;top:467px;width:17px;height:16px;border:1px solid #bdbdbd;background:radial-gradient(circle,#e0e0e0,#555)"></div>
<div class="a" style="left:1777px;top:467px;width:17px;height:16px;border:1px solid #bdbdbd;background:linear-gradient(160deg,#555,#ddd 50%,#666)"></div>
<div class="a" style="left:1740px;top:496px;width:70px;height:20px;border:1px solid #6e6e6e;border-radius:3px"></div>
<div class="t" style="left:1748px;top:499px;color:#e8e8e8;font-size:11px">编辑渐变</div>
<div class="a" style="left:1749px;top:543px;width:138px;height:1px;background:#454545"></div>
<div class="a" style="left:1740px;top:579px;width:39px;height:21px;border:1px solid #6e6e6e;border-radius:3px"></div>
<div class="a" style="left:1789px;top:579px;width:100px;height:21px;border:1px solid #6e6e6e;border-radius:3px"></div>
<div class="t" style="left:1819px;top:583px;color:#e8e8e8;font-size:11px">扩展形状</div>
<div class="a" style="left:1740px;top:610px;width:39px;height:21px;border:1px solid #6e6e6e;border-radius:3px"></div>
<div class="a" style="left:1789px;top:610px;width:100px;height:21px;border:1px solid #6e6e6e;border-radius:3px"></div>
<div class="t" style="left:1808px;top:614px;color:#e8e8e8;font-size:11px">对齐像素网格</div>
<div class="a" style="left:1679px;top:642px;width:210px;height:20px;border:1px solid #6e6e6e;border-radius:3px"></div>
<div class="t" style="left:1764px;top:645px;color:#e8e8e8;font-size:11px">重新着色</div>
<div class="a" style="left:1679px;top:672px;width:188px;height:21px;border:1px solid #6e6e6e;border-radius:3px"></div>
<div class="t" style="left:1743px;top:676px;color:#e8e8e8;font-size:11px">启动全局编辑</div>
<div class="a" style="left:1868px;top:672px;width:22px;height:21px;background:#4a4a4a;border:1px solid #5e5e5e;border-radius:3px"></div>
<div class="chev" style="left:1874px;top:677px;width:6px;height:6px;border-width:2px"></div>

<!-- POPUP -->
<div class="a" style="left:1517px;top:347px;width:232px;height:318px;background:#535353;box-shadow:2px 3px 4px rgba(0,0,0,0.45);border:1px solid #474747"></div>
<div class="t" style="left:1547px;top:357px;color:#d0d0d0">粗细<span style="margin-left:3px">:</span></div>
<div class="a" style="left:1583px;top:353px;width:88px;height:21px;border:1px solid #2d8ceb;background:#464646;border-radius:2px"></div>
<svg class="a" style="left:1588px;top:355px" width="10" height="17" viewBox="0 0 10 17"><path d="M1.5 5 L5 1.5 L8.5 5 M1.5 12 L5 15.5 L8.5 12" stroke="#e0e0e0" stroke-width="1.6" fill="none"/></svg>
<div class="a" style="left:1602px;top:354px;width:50px;height:19px;background:#ffffff"></div>
<div class="a" style="left:1604px;top:356px;width:32px;height:12px;background:#0a6fd6"></div>
<div class="t mono" style="left:1604px;top:355px;color:#fff;font-size:12px;letter-spacing:-0.6px">10 pt</div>
<div class="chev" style="left:1657px;top:358px;width:6px;height:6px;border-width:2px"></div>
<div class="t" style="left:1547px;top:383px;color:#d0d0d0">端点<span style="margin-left:3px">:</span></div>
<div class="a" style="left:1583px;top:380px;width:67px;height:20px;background:#4c4c4c;border-radius:2px"></div>
<div class="a" style="left:1606px;top:380px;width:22px;height:20px;background:#2f2f2f"></div>
<div class="t" style="left:1547px;top:410px;color:#d0d0d0">边角<span style="margin-left:3px">:</span></div>
<div class="a" style="left:1583px;top:407px;width:67px;height:20px;background:#4c4c4c;border-radius:2px"></div>
<div class="a" style="left:1583px;top:407px;width:22px;height:20px;background:#2f2f2f;border-radius:2px 0 0 2px"></div>
<div class="t" style="left:1659px;top:410px;color:#bdbdbd">限制<span style="margin-left:3px">:</span></div>
<div class="fld" style="left:1696px;top:407px;width:37px;height:19px"></div>
<div class="t mono" style="left:1699px;top:409px;color:#ececec;font-size:12px">10</div>
<div class="t mono" style="left:1738px;top:411px;color:#bdbdbd;font-size:11px">x</div>
<div class="t" style="left:1523px;top:437px;color:#d0d0d0">对齐描边<span style="margin-left:3px">:</span></div>
<div class="a" style="left:1583px;top:434px;width:67px;height:20px;background:#4c4c4c;border-radius:2px"></div>
<div class="a" style="left:1583px;top:434px;width:22px;height:20px;background:#2f2f2f;border-radius:2px 0 0 2px"></div>
<div class="a" style="left:1523px;top:460px;width:221px;height:1px;background:#464646"></div>
<div class="a" style="left:1524px;top:472px;width:12px;height:12px;background:#d6d6d6;border-radius:1px"></div>
<div class="a" style="left:1527px;top:474px;width:4px;height:7px;border-right:2px solid #333;border-bottom:2px solid #333;transform:rotate(40deg)"></div>
<div class="t" style="left:1541px;top:471px;color:#e8e8e8">虚线</div>
<div class="a" style="left:1667px;top:468px;width:75px;height:20px;background:#4c4c4c;border-radius:2px"></div>
<div class="a" style="left:1667px;top:468px;width:37px;height:20px;background:#2f2f2f;border-radius:2px 0 0 2px"></div>
<svg class="a" style="left:0;top:0" width="1887" height="941" viewBox="0 0 1887 941"><rect x="1593" y="384" width="8" height="12" fill="#c8c8c8"/><path d="M1588 390 H1596" stroke="#555" stroke-width="1.2"/><circle cx="1588" cy="390" r="1" fill="#c8c8c8"/><path d="M1625 384 H1617 A6 6 0 0 0 1617 396 H1625 Z" fill="#fafafa"/><path d="M1617 390 H1625" stroke="#2f2f2f" stroke-width="2"/><circle cx="1617" cy="390" r="1.3" fill="#2f2f2f"/><rect x="1634" y="384" width="11" height="12" fill="#c8c8c8"/><path d="M1638 390 H1645" stroke="#555" stroke-width="1.5"/><path d="M1587 411 H1600 V417 H1595 V422 H1591 V417 H1587 Z" fill="#fafafa"/><path d="M1587 411 H1600 V422 H1587Z" fill="none"/><rect x="1587" y="411" width="4" height="12" fill="#fafafa"/><path d="M1610 423 V415 A4 4 0 0 1 1614 411 H1623 V417 H1618 V422 H1614 V417 H1614 V423 Z" fill="#c8c8c8"/><path d="M1633 423 V415 L1637 411 H1646 V417 H1641 V422 H1637 V423 Z" fill="#c8c8c8"/><path d="M1587 437 H1591 V447 H1600 V451 H1587 Z" fill="#fafafa"/><path d="M1592 437 V446 H1600" stroke="#fafafa" stroke-width="1" fill="none"/><path d="M1612 437 H1615 V446 H1623 V451 H1612 Z" fill="#c8c8c8"/><path d="M1611 437 V452 H1623" stroke="#c8c8c8" stroke-width="0.8" fill="none"/><path d="M1635 437 H1638 V446 H1646 V451 H1635 Z" fill="#c8c8c8"/><g fill="none" stroke="#fafafa" stroke-width="2.2"><path d="M1672 481 V474 H1676 M1679 473 H1688 M1691 473 H1699 V478 M1672 481 H1677 M1681 482 H1690 M1693 482 H1699"/></g><g fill="none" stroke="#c8c8c8" stroke-width="2.2"><path d="M1710 478 V473 H1714 M1710 479 V483 H1714 M1718 473 H1726 M1718 483 H1726 M1730 473 H1735 V477 M1730 483 H1735 V479"/></g></svg><div class="fld" style="left:1524px;top:495px;width:33px;height:18px"></div>
<div class="fld" style="left:1561px;top:495px;width:33px;height:18px"></div>
<div class="fld" style="left:1598px;top:495px;width:33px;height:18px"></div>
<div class="fld" style="left:1635px;top:495px;width:33px;height:18px"></div>
<div class="fld" style="left:1671px;top:495px;width:33px;height:18px"></div>
<div class="fld" style="left:1709px;top:495px;width:33px;height:18px"></div>
<div class="t mono" style="left:1527px;top:497px;color:#ececec;font-size:12px;letter-spacing:-0.5px">0 pt</div>
<div class="t mono" style="left:1564px;top:497px;color:#ececec;font-size:12px;letter-spacing:-0.5px;width:29px;overflow:hidden">18 pt</div>
<div class="t" style="left:1528px;top:516px;color:#c4c4c4;font-size:11px">虚线</div>
<div class="t" style="left:1565px;top:516px;color:#c4c4c4;font-size:11px">间隙</div>
<div class="t" style="left:1602px;top:516px;color:#c4c4c4;font-size:11px">虚线</div>
<div class="t" style="left:1639px;top:516px;color:#c4c4c4;font-size:11px">间隙</div>
<div class="t" style="left:1675px;top:516px;color:#c4c4c4;font-size:11px">虚线</div>
<div class="t" style="left:1713px;top:516px;color:#c4c4c4;font-size:11px">间隙</div>

<div class="a" style="left:1523px;top:535px;width:221px;height:1px;background:#464646"></div>
<div class="t" style="left:1547px;top:547px;color:#d0d0d0">箭头<span style="margin-left:3px">:</span></div>
<div class="a" style="left:1584px;top:544px;width:37px;height:19px;background:#e6e6e6"></div>
<div class="a" style="left:1589px;top:552px;width:27px;height:3px;background:#000"></div>
<div class="dd" style="left:1622px;top:544px;width:17px;height:19px;background:#464646"></div>
<div class="chev" style="left:1627px;top:549px;width:6px;height:6px;border-width:2px"></div>
<div class="a" style="left:1647px;top:544px;width:37px;height:19px;background:#e6e6e6"></div>
<div class="a" style="left:1652px;top:552px;width:27px;height:3px;background:#000"></div>
<div class="dd" style="left:1685px;top:544px;width:17px;height:19px;background:#464646"></div>
<div class="chev" style="left:1690px;top:549px;width:6px;height:6px;border-width:2px"></div>
<svg class="a" style="left:1724px;top:547px" width="14" height="13" viewBox="0 0 14 13"><path d="M1 4 H12 M9 1 L12 4 M13 9 H2 M5 6 L2 9 M5 12 L2 9" stroke="#8a8a8a" stroke-width="1.4" fill="none"/></svg>
<div class="t" style="left:1547px;top:577px;color:#7a7a7a">缩放<span style="margin-left:3px">:</span></div>
<div class="a" style="left:1584px;top:573px;width:56px;height:20px;border:1px solid #5a5a5a;border-radius:2px"></div>
<div class="t mono" style="left:1605px;top:576px;color:#7a7a7a;font-size:11px;letter-spacing:-0.8px">100%</div>
<div class="a" style="left:1647px;top:573px;width:56px;height:20px;border:1px solid #5a5a5a;border-radius:2px"></div>
<div class="t mono" style="left:1667px;top:576px;color:#7a7a7a;font-size:11px;letter-spacing:-0.8px">100%</div>
<svg class="a" style="left:1587px;top:575px" width="120" height="16" viewBox="0 0 120 16"><path d="M2 5 L5 2 L8 5 M2 11 L5 14 L8 11 M65 5 L68 2 L71 5 M65 11 L68 14 L71 11" stroke="#6e6e6e" stroke-width="1.2" fill="none"/></svg>
<svg class="a" style="left:1722px;top:576px" width="16" height="16" viewBox="0 0 16 16"><path d="M1 1 L15 15 M5 4 V8 A3 3 0 0 0 11 8 M11 12 V9" stroke="#7a7a7a" stroke-width="1.3" fill="none"/></svg>
<div class="t" style="left:1547px;top:606px;color:#7a7a7a">对齐<span style="margin-left:3px">:</span></div>
<div class="a" style="left:1583px;top:602px;width:45px;height:22px;border:1px solid #5a5a5a"></div>
<div class="a" style="left:1605px;top:602px;width:1px;height:22px;background:#5a5a5a"></div>
<svg class="a" style="left:1585px;top:606px" width="40" height="14" viewBox="0 0 40 14"><path d="M3 7 H13 M10 4 L13 7 L10 10 M8 2 V12 M25 7 H35 M32 4 L35 7 L32 10 M25 2 H35" stroke="#747474" stroke-width="1.3" fill="none"/></svg>
<div class="a" style="left:1523px;top:630px;width:221px;height:1px;background:#464646"></div>
<div class="t" style="left:1523px;top:641px;color:#d0d0d0">配置文件<span style="margin-left:3px">:</span></div>
<div class="a" style="left:1584px;top:638px;width:87px;height:19px;background:#e6e6e6"></div>
<div class="a" style="left:1590px;top:647px;width:48px;height:3px;background:#000"></div>
<div class="t" style="left:1643px;top:641px;color:#222">等比</div>
<div class="dd" style="left:1671px;top:638px;width:18px;height:19px;background:#464646"></div>
<div class="chev" style="left:1677px;top:643px;width:6px;height:6px;border-width:2px"></div>
<svg class="a" style="left:1700px;top:641px" width="40" height="14" viewBox="0 0 40 14"><path d="M1 2 L6 7 L1 12 Z M13 2 L8 7 L13 12 Z" fill="none" stroke="#6a6a6a" stroke-width="1.2"/><path d="M7 0 V14" stroke="#6a6a6a" stroke-dasharray="1 1"/><path d="M25 1 H35 L30 6 Z M25 13 L30 8 L35 13" fill="none" stroke="#6a6a6a" stroke-width="1.2"/></svg>
<!-- RED RECT -->
<div class="a" style="left:1478px;top:308px;width:291px;height:210px;border:2px solid #f0141e"></div>

</body></html>
